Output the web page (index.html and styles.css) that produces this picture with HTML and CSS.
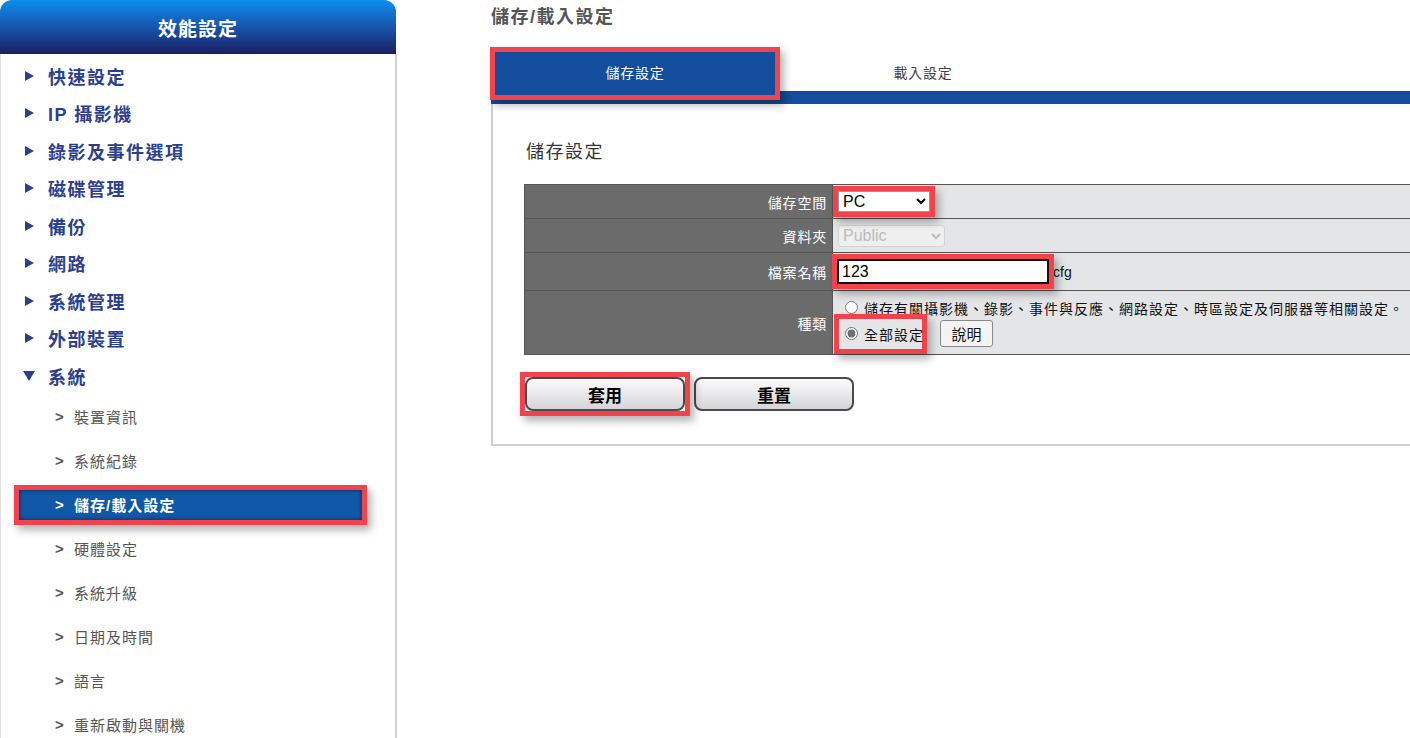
FILE: index.html
```html
<!DOCTYPE html>
<html lang="zh-Hant">
<head>
    <meta charset="UTF-8">
    <meta name="viewport" content="width=device-width, initial-scale=1.0">
    <title>儲存/載入設定</title>
    <link rel="stylesheet" href="styles.css">
</head>
<body>
    <div class="page">
        <aside class="sidebar">
            <div class="side-head">效能設定</div>
            <div class="side-body">
                <ul class="menu">
                    <li><span class="tri"></span>快速設定</li>
                    <li><span class="tri"></span>IP 攝影機</li>
                    <li><span class="tri"></span>錄影及事件選項</li>
                    <li><span class="tri"></span>磁碟管理</li>
                    <li><span class="tri"></span>備份</li>
                    <li><span class="tri"></span>網路</li>
                    <li><span class="tri"></span>系統管理</li>
                    <li><span class="tri"></span>外部裝置</li>
                    <li><span class="tri down"></span>系統</li>
                </ul>
                <ul class="submenu">
                    <li><span class="gt">&gt;</span>裝置資訊</li>
                    <li><span class="gt">&gt;</span>系統紀錄</li>
                    <li class="active"><span class="gt">&gt;</span>儲存/載入設定</li>
                    <li><span class="gt">&gt;</span>硬體設定</li>
                    <li><span class="gt">&gt;</span>系統升級</li>
                    <li><span class="gt">&gt;</span>日期及時間</li>
                    <li><span class="gt">&gt;</span>語言</li>
                    <li><span class="gt">&gt;</span>重新啟動與關機</li>
                </ul>
            </div>
        </aside>

        <main class="main">
            <h1 class="page-title">儲存/載入設定</h1>
            <div class="tabs">
                <div class="tab active mark">儲存設定</div>
                <div class="tab">載入設定</div>
            </div>
            <div class="panel">
                <h2 class="panel-title">儲存設定</h2>
                <table class="form-table">
                    <tr class="r1">
                        <td class="label">儲存空間</td>
                        <td class="value">
                            <select class="sel-pc mark">
                                <option>PC</option>
                            </select>
                        </td>
                    </tr>
                    <tr class="r2">
                        <td class="label">資料夾</td>
                        <td class="value">
                            <select class="sel-folder" disabled>
                                <option>Public</option>
                            </select>
                        </td>
                    </tr>
                    <tr class="r3">
                        <td class="label">檔案名稱</td>
                        <td class="value">
                            <input type="text" class="file-name mark" value="123"><span class="ext">cfg</span>
                        </td>
                    </tr>
                    <tr class="r4">
                        <td class="label">種類</td>
                        <td class="value">
                            <div class="radio-line">
                                <input type="radio" name="kind" class="radio">
                                <span>儲存有關攝影機、錄影、事件與反應、網路設定、時區設定及伺服器等相關設定。</span>
                            </div>
                            <div class="radio-line second">
                                <span class="radio-mark mark">
                                    <input type="radio" name="kind" class="radio" checked>
                                    <span>全部設定</span>
                                </span>
                                <button class="help-btn">說明</button>
                            </div>
                        </td>
                    </tr>
                </table>
                <div class="actions">
                    <span class="btn-wrap mark"><button class="btn">套用</button></span>
                    <button class="btn">重置</button>
                </div>
            </div>
        </main>
    </div>
</body>
</html>
```

FILE: styles.css
```css
body {
    margin: 0;
    font-family: "Liberation Sans", "Noto Sans CJK TC", sans-serif;
    background: #fff;
    overflow: hidden;
}
.page {
    display: flex;
    height: 738px;
}

/* red annotation boxes */
.mark {
    position: relative;
    z-index: 1;
    box-shadow: 0 0 0 5px #f0434b, 4px 5px 8px 5px rgba(0, 0, 0, 0.3);
}

/* sidebar */
.sidebar {
    width: 397px;
    flex: none;
    display: flex;
    flex-direction: column;
}
.side-head {
    flex: none;
    width: 396px;
    height: 54px;
    border-radius: 12px 12px 0 0;
    background: linear-gradient(#0a8eec, #1660bb 40%, #1c1f62);
    color: #fff;
    font-size: 19px;
    font-weight: bold;
    letter-spacing: 1px;
    display: flex;
    align-items: center;
    justify-content: center;
}
.side-body {
    flex: 1;
    border-left: 1px solid #e2e2e2;
    border-right: 2px solid #d2d2d2;
    padding-top: 3px;
}
.menu,
.submenu {
    list-style: none;
    margin: 0;
    padding: 0;
}
.menu li {
    height: 37.5px;
    display: flex;
    align-items: center;
    padding-left: 24px;
    font-size: 18px;
    font-weight: bold;
    color: #2b3f8e;
    letter-spacing: 1.5px;
}
.tri {
    width: 0;
    height: 0;
    border-left: 9px solid #2b3f8e;
    border-top: 5.5px solid transparent;
    border-bottom: 5.5px solid transparent;
    margin-right: 14px;
}
.tri.down {
    border-left: 6px solid transparent;
    border-right: 6px solid transparent;
    border-top: 10px solid #2b3f8e;
    border-bottom: 0;
    margin-left: -2px;
    margin-right: 13px;
}
.submenu li {
    height: 44px;
    display: flex;
    align-items: center;
    padding-left: 54px;
    font-size: 15px;
    color: #555;
    letter-spacing: 1px;
}
.gt {
    display: inline-block;
    width: 19px;
    font-weight: bold;
    letter-spacing: 0;
}
.submenu li.active {
    height: 30px;
    margin: 7px 33px 7px 18px;
    padding-left: 36px;
    background: #1158a8;
    color: #fff;
    font-weight: bold;
    box-shadow: inset 0 0 4px rgba(0, 0, 30, 0.6), 0 0 0 5px #f0434b, 4px 5px 8px 5px rgba(0, 0, 0, 0.3);
}

/* main */
.main {
    flex: 1;
    padding-left: 94px;
    overflow: hidden;
}
.page-title {
    margin: 0;
    height: 52px;
    line-height: 35px;
    font-size: 18px;
    font-weight: bold;
    color: #555;
    letter-spacing: 1.5px;
}
.tabs {
    display: flex;
    width: 1000px;
    height: 39px;
    border-bottom: 13px solid #134d9b;
}
.tab {
    width: 296px;
    flex: none;
    display: flex;
    align-items: center;
    justify-content: center;
    font-size: 14px;
    color: #444;
    letter-spacing: 0.8px;
}
.tab.active {
    width: 280px;
    height: 40px;
    padding-bottom: 3px;
    margin-left: 4px;
    background: #134d9b;
    color: #fff;
}
.panel {
    width: 1000px;
    box-sizing: border-box;
    border: 2px solid #cfcfcf;
    border-top: 0;
    padding: 35px 0 33px 31px;
}
.panel-title {
    margin: 0 0 19px 2px;
    font-size: 18px;
    font-weight: normal;
    line-height: 26px;
    color: #333;
    letter-spacing: 1.5px;
}

/* form table */
.form-table {
    width: 900px;
    border-collapse: collapse;
    font-size: 14px;
}
.form-table td {
    border: 1px solid #555;
    padding: 0;
}
.form-table .label {
    width: 302px;
    background: #6b6b6b;
    color: #fff;
    text-align: right;
    padding-right: 5px;
    letter-spacing: 0.8px;
}
.form-table .value {
    background: #e4e5e7;
    color: #111;
    padding-left: 4px;
}
.r1 td {
    height: 33px;
}
.r2 td {
    height: 33px;
}
.r3 td {
    height: 37px;
}
.r4 td {
    height: 63px;
}
.sel-pc {
    width: 92px;
    height: 21px;
    margin-left: 1px;
    font-size: 16px;
    font-family: "Liberation Sans", sans-serif;
    background: #fff;
    border: 1px solid #999;
    vertical-align: middle;
}
.sel-folder {
    width: 107px;
    height: 22px;
    margin-left: 1px;
    font-size: 16px;
    font-family: "Liberation Sans", sans-serif;
    color: #aaa;
    background: #f4f4f4;
    border: 1px solid #ccc;
    border-radius: 3px;
    vertical-align: middle;
}
.file-name {
    width: 212px;
    height: 25px;
    box-sizing: border-box;
    border: 2px solid #111;
    padding: 0 3px;
    font-size: 16px;
    font-family: "Liberation Sans", sans-serif;
    vertical-align: middle;
}
.ext {
    margin-left: 4px;
    vertical-align: middle;
}
.radio-line {
    display: flex;
    align-items: center;
    height: 22px;
    letter-spacing: 1px;
    white-space: nowrap;
}
.radio-line.second {
    height: 30px;
}
.radio {
    width: 13px;
    height: 13px;
    margin: 0 6px 0 8px;
    accent-color: #707070;
}
.radio-mark {
    display: inline-flex;
    align-items: center;
    width: 83px;
    height: 30px;
    margin-left: 2px;
}
.radio-mark .radio {
    margin-left: 6px;
}
.help-btn {
    width: 53px;
    height: 27px;
    margin-left: 18px;
    font-size: 15px;
    font-family: "Liberation Sans", "Noto Sans CJK TC", sans-serif;
    border: 1px solid #8a8a8a;
    border-radius: 3px;
    background: #f4f4f4;
    color: #111;
}

/* buttons */
.actions {
    display: flex;
    gap: 9px;
    margin-top: 22px;
    padding-left: 1px;
}
.btn-wrap {
    display: flex;
}
.btn {
    width: 160px;
    height: 34px;
    border: 2px solid #4a4a4a;
    border-radius: 8px;
    background: linear-gradient(#fbfbfb, #d6d6da);
    font-size: 17px;
    font-weight: bold;
    font-family: "Liberation Sans", "Noto Sans CJK TC", sans-serif;
    color: #000;
    cursor: pointer;
}
```
